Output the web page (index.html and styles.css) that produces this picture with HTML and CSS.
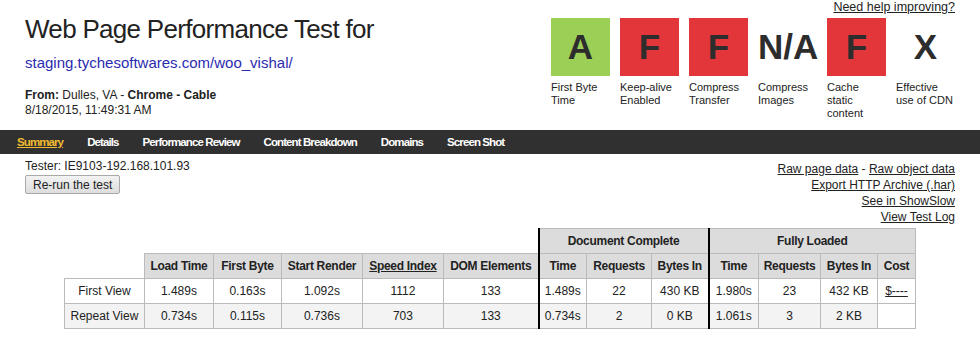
FILE: index.html
```html
<!DOCTYPE html>
<html lang="en">
<head>
    <meta charset="UTF-8">
    <meta name="viewport" content="width=device-width, initial-scale=1.0">
    <title>WebPagetest Test Result</title>
    <link rel="stylesheet" href="styles.css">
</head>
<body>

<div class="header">
    <div class="test-info">
        <h1>Web Page Performance Test for</h1>
        <a href="#" class="test-url">staging.tychesoftwares.com/woo_vishal/</a>
        <p class="test-meta"><strong>From:</strong> Dulles, VA - <strong>Chrome - Cable</strong><br>8/18/2015, 11:49:31 AM</p>
    </div>
    <div class="grades">
        <a href="#" class="help-link">Need help improving?</a>
        <ul class="grade-list">
            <li><span class="grade grade-a">A</span>First Byte Time</li>
            <li><span class="grade grade-f">F</span>Keep-alive Enabled</li>
            <li><span class="grade grade-f">F</span>Compress Transfer</li>
            <li><span class="grade">N/A</span>Compress Images</li>
            <li><span class="grade grade-f">F</span>Cache static content</li>
            <li><span class="grade">X</span>Effective use of CDN</li>
        </ul>
    </div>
</div>

<nav class="tabs">
    <a href="#" class="current">Summary</a>
    <a href="#">Details</a>
    <a href="#">Performance Review</a>
    <a href="#">Content Breakdown</a>
    <a href="#">Domains</a>
    <a href="#">Screen Shot</a>
</nav>

<div class="toolbar">
    <div class="tester">
        <div class="tester-name">Tester: IE9103-192.168.101.93</div>
        <button class="rerun">Re-run the test</button>
    </div>
    <div class="raw-links">
        <div><a href="#">Raw page data</a> - <a href="#">Raw object data</a></div>
        <div><a href="#">Export HTTP Archive (.har)</a></div>
        <div><a href="#">See in ShowSlow</a></div>
        <div><a href="#">View Test Log</a></div>
    </div>
</div>

<table class="results">
    <colgroup>
        <col class="c-label"><col class="c-load"><col class="c-byte"><col class="c-render"><col class="c-speed"><col class="c-dom">
        <col class="c-time"><col class="c-req"><col class="c-bytes">
        <col class="c-time2"><col class="c-req2"><col class="c-bytes2"><col class="c-cost">
    </colgroup>
    <tr>
        <th colspan="6" class="blank"></th>
        <th colspan="3" class="thick">Document Complete</th>
        <th colspan="4" class="thick">Fully Loaded</th>
    </tr>
    <tr>
        <th class="blank"></th>
        <th>Load Time</th>
        <th>First Byte</th>
        <th>Start Render</th>
        <th><a href="#">Speed Index</a></th>
        <th>DOM Elements</th>
        <th class="thick">Time</th>
        <th>Requests</th>
        <th>Bytes In</th>
        <th class="thick">Time</th>
        <th>Requests</th>
        <th>Bytes In</th>
        <th>Cost</th>
    </tr>
    <tr>
        <td>First View</td>
        <td>1.489s</td>
        <td>0.163s</td>
        <td>1.092s</td>
        <td>1112</td>
        <td>133</td>
        <td class="thick">1.489s</td>
        <td>22</td>
        <td>430 KB</td>
        <td class="thick">1.980s</td>
        <td>23</td>
        <td>432 KB</td>
        <td><a href="#">$----</a></td>
    </tr>
    <tr class="repeat">
        <td>Repeat View</td>
        <td>0.734s</td>
        <td>0.115s</td>
        <td>0.736s</td>
        <td>703</td>
        <td>133</td>
        <td class="thick">0.734s</td>
        <td>2</td>
        <td>0 KB</td>
        <td class="thick">1.061s</td>
        <td>3</td>
        <td>2 KB</td>
        <td class="empty"></td>
    </tr>
</table>

</body>
</html>
```

FILE: styles.css
```css
body {
    font-family: "Liberation Sans", Arial, sans-serif;
    font-size: 12px;
    margin: 0;
    padding: 0;
    background-color: #fff;
    color: #222;
}
a {
    color: #222;
}
.header {
    display: flex;
    justify-content: space-between;
    height: 130px;
    padding: 0 25px;
}
.header h1 {
    font-size: 26px;
    font-weight: normal;
    letter-spacing: -0.7px;
    line-height: 30px;
    margin: 14px 0 0;
}
.test-url {
    display: block;
    margin-top: 10px;
    font-size: 15px;
    line-height: 18px;
    color: #2b2bb0;
    text-decoration: none;
}
.test-meta {
    margin: 16px 0 0;
    line-height: 15px;
}
.grades {
    display: flex;
    flex-direction: column;
    align-items: flex-end;
}
.help-link {
    font-size: 12.5px;
    line-height: 14px;
}
.grade-list {
    display: flex;
    gap: 10px;
    list-style: none;
    margin: 4px 0 0;
    padding: 0;
}
.grade-list li {
    width: 59px;
    font-size: 11px;
    line-height: 13px;
}
.grade {
    display: block;
    height: 58px;
    line-height: 58px;
    margin-bottom: 5px;
    text-align: center;
    font-size: 35px;
    font-weight: bold;
    color: #2d2d2d;
}
.grade-a {
    background-color: #9ccf55;
}
.grade-f {
    background-color: #e3363a;
}
.tabs {
    display: flex;
    height: 24px;
    padding-left: 5px;
    background: #303030;
}
.tabs a {
    font-weight: bold;
    font-size: 11.5px;
    letter-spacing: -0.9px;
    line-height: 24px;
    padding: 0 12px;
    color: #fff;
    text-decoration: none;
}
.tabs a.current {
    color: #f0bb30;
    text-decoration: underline;
}
.toolbar {
    display: flex;
    justify-content: space-between;
    padding: 0 25px;
    margin-top: 5px;
}
.tester-name {
    line-height: 14px;
}
.rerun {
    margin-top: 2px;
    height: 19px;
    padding: 0 7px;
    font-family: "Liberation Sans", Arial, sans-serif;
    font-size: 12px;
    color: #222;
    background: linear-gradient(#f3f3f3, #dddddd);
    border: 1px solid #a9a9a9;
    border-radius: 2px;
}
.raw-links {
    padding-top: 2px;
    text-align: right;
    line-height: 16px;
}
.results {
    margin: 3px auto 0;
    width: 851px;
    table-layout: fixed;
    border-collapse: collapse;
}
.results th,
.results td {
    height: 24px;
    padding: 0;
    text-align: center;
    border: 1px solid #bbb;
    font-size: 12px;
    white-space: nowrap;
}
.results th {
    background-color: #dcdcdc;
    letter-spacing: -0.3px;
}
.results th.blank {
    background: none;
    border: none;
}
.results .thick {
    border-left: 2px solid #000;
}
.results .repeat td {
    background-color: #f3f3f3;
}
.results .repeat td.empty {
    background-color: #fff;
}
.c-label { width: 80px; }
.c-load { width: 69px; }
.c-byte { width: 68px; }
.c-render { width: 81px; }
.c-speed { width: 81px; }
.c-dom { width: 95px; }
.c-time { width: 48px; }
.c-req { width: 65px; }
.c-bytes { width: 57px; }
.c-time2 { width: 50px; }
.c-req2 { width: 62px; }
.c-bytes2 { width: 57px; }
.c-cost { width: 38px; }
```
